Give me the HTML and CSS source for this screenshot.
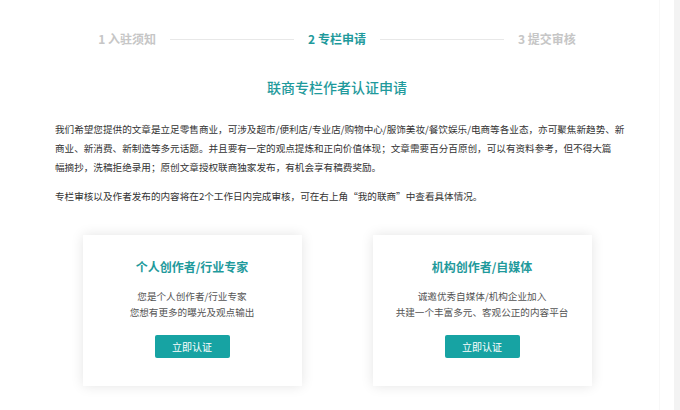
FILE: index.html
```html
<!DOCTYPE html>
<html lang="zh-CN">
<head>
  <meta charset="UTF-8">
  <meta name="viewport" content="width=device-width, initial-scale=1.0">
  <title>联商专栏作者认证申请</title>
  <link rel="stylesheet" href="styles.css">
</head>
<body>
  <div class="page">
    <div class="wrap">
      <nav class="steps">
        <span class="step">1 入驻须知</span>
        <span class="step-line"></span>
        <span class="step active">2 专栏申请</span>
        <span class="step-line"></span>
        <span class="step">3 提交审核</span>
      </nav>

      <h1 class="title">联商专栏作者认证申请</h1>

      <section class="intro">
        <p>我们希望您提供的文章是立足零售商业，可涉及超市/便利店/专业店/购物中心/服饰美妆/餐饮娱乐/电商等各业态，亦可聚焦新趋势、新商业、新消费、新制造等多元话题。并且要有一定的观点提炼和正向价值体现；文章需要百分百原创，可以有资料参考，但不得大篇<br>幅摘抄，洗稿拒绝录用；原创文章授权联商独家发布，有机会享有稿费奖励。</p>
        <p class="note">专栏审核以及作者发布的内容将在2个工作日内完成审核，可在右上角“我的联商”中查看具体情况。</p>
      </section>

      <section class="cards">
        <div class="card">
          <h2 class="card-title">个人创作者/行业专家</h2>
          <p class="card-desc">您是个人创作者/行业专家<br>您想有更多的曝光及观点输出</p>
          <button class="btn">立即认证</button>
        </div>
        <div class="card">
          <h2 class="card-title">机构创作者/自媒体</h2>
          <p class="card-desc">诚邀优秀自媒体/机构企业加入<br>共建一个丰富多元、客观公正的内容平台</p>
          <button class="btn">立即认证</button>
        </div>
      </section>
    </div>
  </div>
</body>
</html>
```

FILE: styles.css
```css
body {
  margin: 0;
  padding: 0;
  background-color: #f3f3f3;
  font-family: "Noto Sans CJK SC", "Noto Sans", sans-serif;
  color: #333;
}
.page {
  width: 674px;
  height: 410px;
  background-color: #ffffff;
  overflow: hidden;
}
.wrap {
  width: 645px;
  margin-left: 15px;
  box-sizing: border-box;
  padding: 0 30px 0 40px;
  border-right: 1px solid #f8f8f8;
  height: 410px;
}
.steps {
  display: flex;
  align-items: center;
  justify-content: center;
  gap: 14px;
  padding-top: 31px;
  padding-right: 10px;
  height: 16px;
}
.step {
  font-size: 12px;
  line-height: 16px;
  font-weight: bold;
  color: #c6c6c6;
}
.step.active {
  color: #1f9a9c;
}
.step-line {
  width: 124px;
  height: 1px;
  background-color: #e8e8e8;
}
.title {
  margin: 31px 0 0;
  padding-right: 10px;
  font-size: 14px;
  line-height: 18px;
  font-weight: 500;
  color: #1f9a9c;
  text-align: center;
}
.intro {
  margin-top: 24px;
}
.intro p {
  margin: 0;
  font-size: 9.6px;
  line-height: 19px;
  color: #333;
}
.intro .note {
  margin-top: 10px;
}
.cards {
  display: flex;
  justify-content: center;
  gap: 71px;
  margin-top: 29px;
  margin-left: -40px;
  margin-right: -30px;
}
.card {
  width: 219px;
  box-sizing: border-box;
  padding: 24px 0 28px;
  background-color: #fff;
  box-shadow: 0 0 12px rgba(0, 0, 0, 0.11);
  text-align: center;
}
.card-title {
  margin: 0;
  font-size: 12px;
  line-height: 16px;
  font-weight: bold;
  color: #1f9a9c;
}
.card-desc {
  margin: 13px 0 0;
  font-size: 9.6px;
  line-height: 16px;
  color: #555;
}
.btn {
  display: block;
  margin: 15px auto 0;
  width: 75px;
  height: 23px;
  padding: 0;
  border: none;
  border-radius: 2px;
  background-color: #17a3a3;
  color: #fff;
  font-family: inherit;
  font-size: 10px;
  cursor: pointer;
}
```
